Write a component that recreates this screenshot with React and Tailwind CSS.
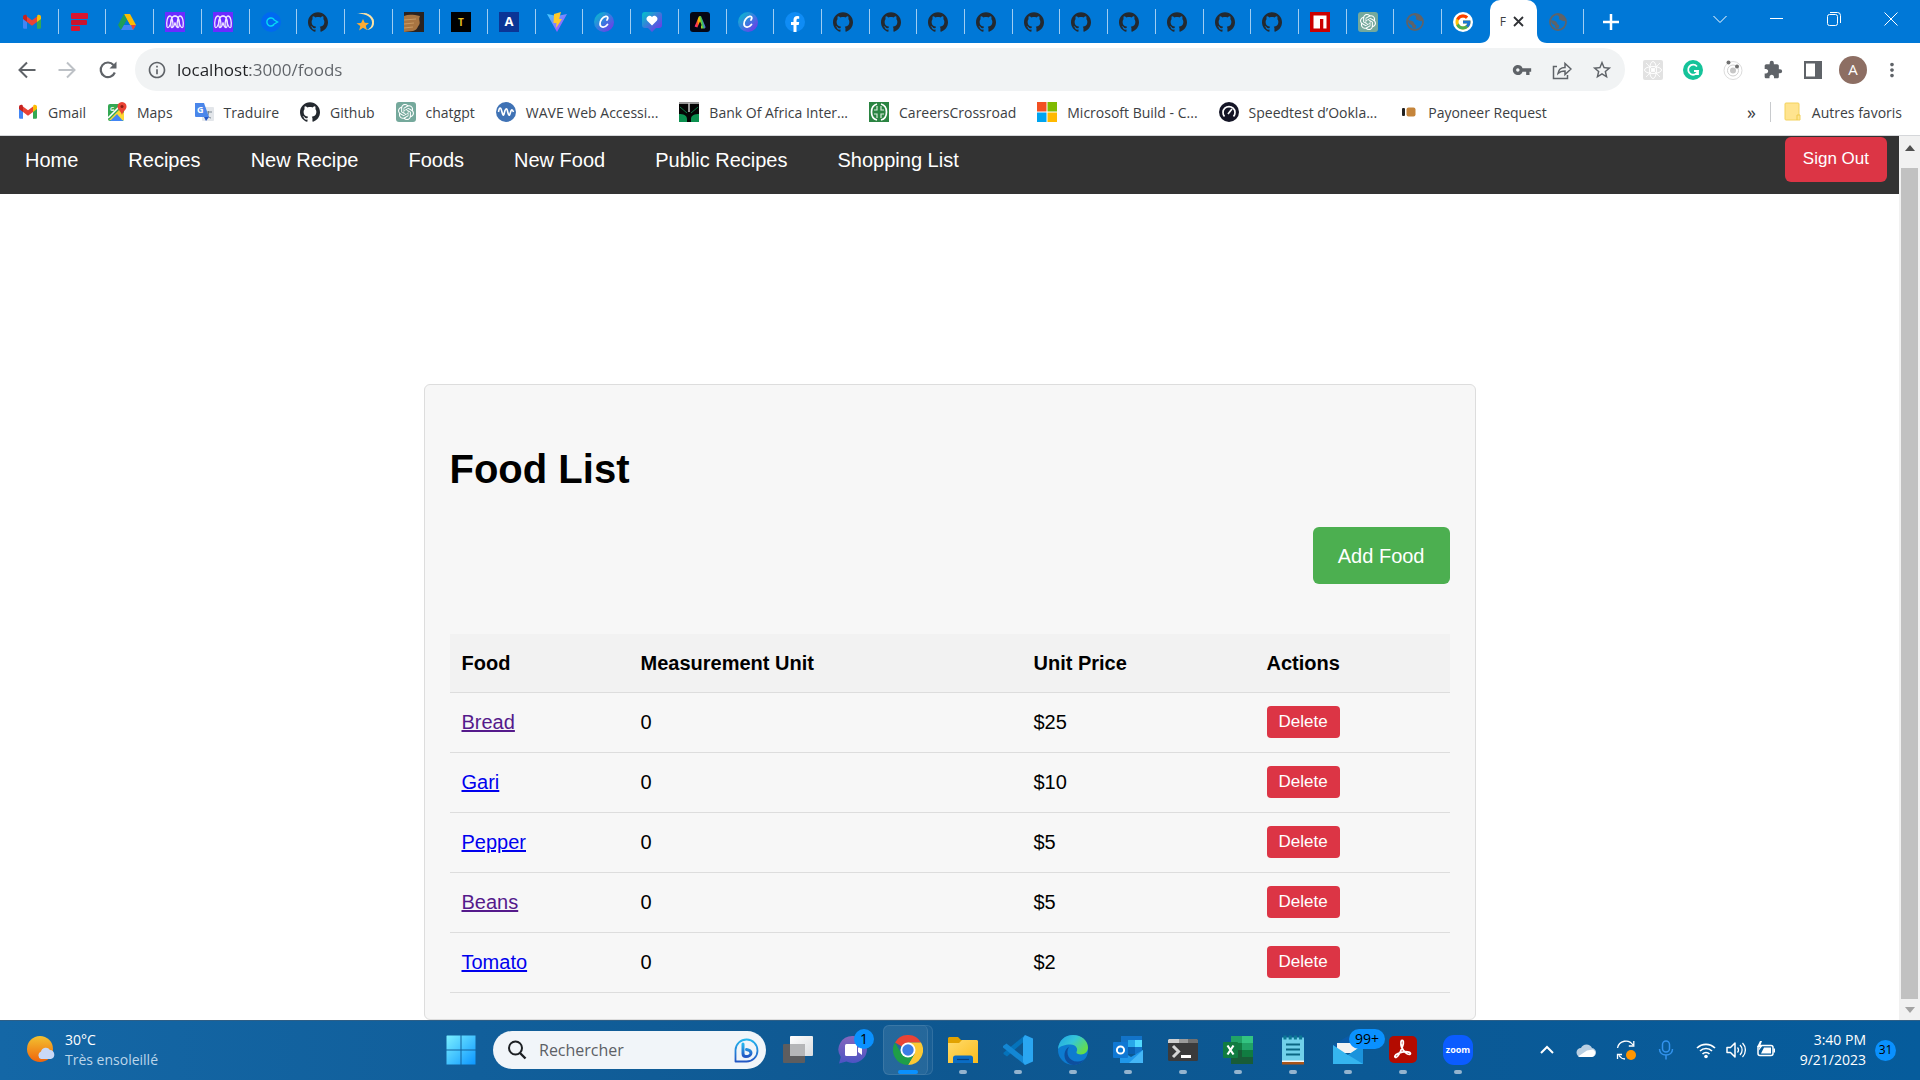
import React from "react";
import { SiGithub, SiOpenai } from "react-icons/si";
import { FcGoogle } from "react-icons/fc";
import {
  MdVpnKey,
  MdExtension,
  MdStarBorder,
  MdMoreVert,
  MdInfoOutline,
} from "react-icons/md";

/* ---------- shared icons ---------- */

const Svg = ({ className = "h-5 w-5", box = "0 0 20 20", children }) => (
  <svg className={className} viewBox={box} fill="none" aria-hidden="true">
    {children}
  </svg>
);

const Gmail = () => (
  <Svg>
    <path d="M1 5v10.5c0 .8.6 1.3 1.3 1.3H5V9z" fill="#4285f4" />
    <path d="M19 5v10.5c0 .8-.6 1.3-1.3 1.3H15V9z" fill="#34a853" />
    <path d="M15 5.5V10l4-3V5c0-2-2.200-2.900-3.600-1.800z" fill="#fbbc04" />
    <path d="M5 10V4.500l5 3.800 5-3.800V10l-5 3.800z" fill="#ea4335" />
    <path d="M1 5v2l4 3V4.500L4.600 3.200C3.200 2.100 1 3 1 5z" fill="#c5221f" />
  </Svg>
);

const Freeform = () => (
  <Svg>
    <rect x="1" y="1" width="17" height="6" rx="1" fill="#d9152f" />
    <rect x="1" y="8" width="16" height="5" rx="1" fill="#c8142d" />
    <rect x="1" y="14" width="9" height="5" rx="1" fill="#d9152f" />
  </Svg>
);

const Drive = () => (
  <Svg>
    <path d="M7 2h6l6 11h-6z" fill="#fbbc04" />
    <path d="M7 2l3 6-6 10-3-5z" fill="#1e9d57" />
    <path d="M7 13h12l-3 5H4z" fill="#4285f4" />
    <path d="M14 13h5l-3 5z" fill="#ea4335" />
    <path d="M10 8l3 5H7z" fill="#0078d7" />
  </Svg>
);

const Loops = () => (
  <Svg>
    <rect width="20" height="20" fill="#6c2bff" />
    <path
      d="M2 15C1 10 2.500 4 5 4s4 11 2 11.500S5 4 10 4s5 11 3 11.500S12.500 4 15 4s4 6 3 11"
      stroke="#efe8ff"
      strokeWidth="1.300"
    />
    <path
      d="M2 15c1.500 2 3.500-2 4-6s2-5 4-5M18 15c-1.500 2-3.500-2-4-6s-2-5-4-5M7 15.500c2 0 2.500-3 3-5 .5 2 1 5 3 5"
      stroke="#efe8ff"
      strokeWidth="1.200"
    />
  </Svg>
);

const CircleC = () => (
  <Svg>
    <circle cx="10" cy="10" r="10" fill="#0069f0" />
    <path d="M13 7.500A4 4 0 1 0 13 12.500M12.500 7.500l4 2.500-4 2.500" stroke="#05dcf5" strokeWidth="1.400" />
  </Svg>
);

const GithubTab = () => <SiGithub className="h-5 w-5 text-[#24292f]" />;

const Dizzy = () => (
  <Svg>
    <path d="M1 2c9-3 17 2 17 9 0 4-3 7-8 7 4-1 6-4 6-7.500C16 5 9 1 1 2z" fill="#fbe3a5" />
    <path d="M8 1.500c4 0 10 3.500 9.500 9" stroke="#fbe3a5" />
    <path d="M7 7l1.800 3.800 4.200.2-3.200 2.800 1.200 4.200L7 15.800 3.200 18.500l1.100-4.500L.5 11.200l4.600-.3z" fill="#ffac33" />
  </Svg>
);

const Wood = () => (
  <Svg>
    <rect width="20" height="20" fill="#2b2320" />
    <path d="M0 4c5-2 10-1 16 0-2 4 1 6-1 9s-2 5-6 6L0 20z" fill="#a87542" />
    <path d="M0 8l12-1M0 12l10-1M0 16l9-1" stroke="#c99a63" strokeWidth="1.200" />
  </Svg>
);

const Letter = ({ bg, color, children, size = "11" }) => (
  <Svg>
    <rect width="20" height="20" fill={bg} />
    <text x="10" y="14" textAnchor="middle" fontSize={size} fontWeight="700" fontFamily="Open Sans, sans-serif" fill={color}>
      {children}
    </text>
  </Svg>
);

const Vite = () => (
  <Svg>
    <defs>
      <linearGradient id="viteBody" x1="0" y1="0" x2="1" y2="1">
        <stop offset="0" stopColor="#41d1ff" />
        <stop offset="1" stopColor="#bd34fe" />
      </linearGradient>
    </defs>
    <path d="M0 2l10 2 10-2-10 18z" fill="url(#viteBody)" />
    <path d="M14 0L7 2l-.5 9h3L9 16l6-9h-3z" fill="#ffc928" />
  </Svg>
);

const Canva = () => (
  <Svg>
    <defs>
      <linearGradient id="canvaDisc" x1="0" y1="0" x2="1" y2="1">
        <stop offset="0" stopColor="#00c4cc" />
        <stop offset=".5" stopColor="#3a7be0" />
        <stop offset="1" stopColor="#7d2ae8" />
      </linearGradient>
    </defs>
    <circle cx="10" cy="10" r="10" fill="url(#canvaDisc)" />
    <path d="M13 8c1.500-2 .8-4-1.200-3.600C8.500 5 5.800 9 6 12c.3 4 5 4 7.500.5" stroke="#fff" strokeWidth="1.800" strokeLinecap="round" />
  </Svg>
);

const Heart = () => (
  <Svg>
    <defs>
      <linearGradient id="heartBubble" x1="0" y1="0" x2="1" y2="1">
        <stop offset="0" stopColor="#00c4cc" />
        <stop offset="1" stopColor="#7d2ae8" />
      </linearGradient>
    </defs>
    <path d="M3 0h14a3 3 0 0 1 3 3v10a3 3 0 0 1-3 3h-3l-4 4-4-4H3a3 3 0 0 1-3-3V3a3 3 0 0 1 3-3z" fill="url(#heartBubble)" />
    <path d="M10 13.500L5 8.500C3 5.500 7.500 2 10 5c2.500-3 7 .5 5 3.500z" fill="#fff" />
  </Svg>
);

const Express = () => (
  <Svg>
    <defs>
      <linearGradient id="expressMark" x1="5" y1="14" x2="15" y2="12" gradientUnits="userSpaceOnUse">
        <stop offset="0" stopColor="#ff2d95" />
        <stop offset=".25" stopColor="#ff3b30" />
        <stop offset=".5" stopColor="#ffcc00" />
        <stop offset=".75" stopColor="#34c759" />
        <stop offset="1" stopColor="#5856ff" />
      </linearGradient>
    </defs>
    <rect width="20" height="20" rx="3" fill="#050614" />
    <path d="M6 15l4-9.500L14 15h-3" stroke="url(#expressMark)" strokeWidth="3" strokeLinejoin="round" />
  </Svg>
);

const Facebook = () => (
  <Svg>
    <circle cx="10" cy="10" r="10" fill="#0f8cf5" />
    <path d="M8.500 20v-7H6v-3h2.500V7.800C8.500 5.300 10 4 12.200 4l2 .2v2.600h-1.200c-1.200 0-1.500.7-1.500 1.500V10h2.700l-.5 3h-2.200v7z" fill="#fff" />
  </Svg>
);

const Npm = () => (
  <Svg>
    <rect width="20" height="20" fill="#cb0000" />
    <path d="M3.500 3.500h13v13h-3.200V7H10v9.500H3.500z" fill="#fff" />
  </Svg>
);

const ChatGpt = () => (
  <span className="flex h-5 w-5 items-center justify-center rounded-[3px] bg-[#75a99c]">
    <SiOpenai className="h-4 w-4 text-white" />
  </span>
);

const DarkGlobe = () => (
  <Svg>
    <circle cx="10" cy="10" r="8" stroke="#5f6368" strokeWidth="1.800" />
    <path d="M3 8c2 1 5 0 6 3s3 1 2 4-4 1-4-1-4-1-4-6zM9 2c0 2 3 2 2 4s3 2 4 3 2-1 3 1c0-4-4-9-9-8z" fill="#5f6368" />
  </Svg>
);

const GoogleTab = () => (
  <span className="flex h-5 w-5 items-center justify-center rounded-full bg-white">
    <FcGoogle className="h-[18px] w-[18px]" />
  </span>
);

const leadingTabs = [
  ["Gmail", Gmail],
  ["Freeform", Freeform],
  ["Drive", Drive],
  ["Microverse", Loops],
  ["Microverse program", Loops],
  ["Coursera", CircleC],
  ["GitHub", GithubTab],
  ["Magic", Dizzy],
  ["Woodwork", Wood],
  ["T", () => <Letter bg="#000" color="#e8c020" size="10">T</Letter>],
  ["A", () => <Letter bg="#0b3596" color="#fff" size="13">A</Letter>],
  ["Vite", Vite],
  ["Canva", Canva],
  ["Favourites", Heart],
  ["Express", Express],
  ["Canva design", Canva],
  ["Facebook", Facebook],
  ...Array.from({ length: 10 }, (_, i) => [`GitHub page ${i + 1}`, GithubTab]),
  ["npm", Npm],
  ["ChatGPT", ChatGpt],
  ["Localhost", DarkGlobe],
  ["Google", GoogleTab],
];

/* ---------- browser frame ---------- */

function Tab({ label, Icon, divider = true }) {
  return (
    <button
      aria-label={label}
      className="relative flex min-w-0 flex-1 basis-0 items-center pl-[11px]"
    >
      <Icon />
      {divider && <span className="absolute right-0 h-[25px] w-px bg-[#9fcdf2]" />}
    </button>
  );
}

function TabStrip() {
  return (
    <div className="flex h-[43px] bg-[#0078d7]">
      <div className="ml-[11px] flex flex-1">
        {leadingTabs.map(([label, Icon], i) => (
          <Tab key={label} label={label} Icon={Icon} divider={i < leadingTabs.length - 1} />
        ))}
        <div className="relative flex min-w-0 flex-1 basis-0 items-center rounded-t-[10px] bg-white pl-[10px]">
          <svg className="absolute bottom-0 -left-[10px] h-[10px] w-[10px]" viewBox="0 0 10 10" aria-hidden="true">
            <path d="M10 0v10H0C6 10 10 6 10 0z" fill="#fff" />
          </svg>
          <svg className="absolute -right-[10px] bottom-0 h-[10px] w-[10px]" viewBox="0 0 10 10" aria-hidden="true">
            <path d="M0 0v10h10C4 10 0 6 0 0z" fill="#fff" />
          </svg>
          <span className="text-[12px] text-[#3c4043]">F</span>
          <button aria-label="Close tab" className="ml-0.5 flex h-5 w-5 items-center justify-center">
            <Svg className="h-[11px] w-[11px]" box="0 0 11 11">
              <path d="M1 1l9 9M10 1l-9 9" stroke="#303236" strokeWidth="1.800" />
            </Svg>
          </button>
        </div>
        <Tab label="Localhost page" Icon={DarkGlobe} />
      </div>
      <div className="flex w-[336px] items-center">
        <button aria-label="New tab" className="ml-[19px]">
          <Svg className="h-4 w-4" box="0 0 16 16">
            <path d="M8 0v16M0 8h16" stroke="#fff" strokeWidth="2.500" />
          </Svg>
        </button>
        <div className="mr-px ml-auto flex h-full items-start">
          <button aria-label="Search tabs" className="flex h-[37px] w-[57px] items-center justify-center">
            <Svg className="h-[14px] w-[14px]" box="0 0 14 14">
              <path d="M0.500 4l6.500 6.500L13.500 4" stroke="#fff" />
            </Svg>
          </button>
          <button aria-label="Minimise" className="flex h-[37px] w-[57px] items-center justify-center">
            <span className="h-px w-[13px] bg-white" />
          </button>
          <button aria-label="Restore" className="flex h-[37px] w-[57px] items-center justify-center">
            <Svg className="h-[14px] w-[14px]" box="0 0 14 14">
              <rect x=".5" y="2.500" width="10" height="11" rx="2" stroke="#fff" />
              <path d="M3 .5h7.500a3 3 0 0 1 3 3V11" stroke="#fff" />
            </Svg>
          </button>
          <button aria-label="Close window" className="flex h-[37px] w-[57px] items-center justify-center">
            <Svg className="h-[14px] w-[14px]" box="0 0 14 14">
              <path d="M.5.5l13 13M13.500.5l-13 13" stroke="#fff" />
            </Svg>
          </button>
        </div>
      </div>
    </div>
  );
}

function Toolbar() {
  return (
    <div className="flex h-[50px] items-center bg-white pt-[3px] text-[#5f6368]">
      <div className="flex w-[135px] items-center pl-[17px]">
        <button aria-label="Back" className="w-5">
          <Svg>
            <path d="M18.500 10H3M10 2.500L2.500 10l7.500 7.500" stroke="#5f6368" strokeWidth="2" />
          </Svg>
        </button>
        <button aria-label="Forward" className="ml-5 w-5">
          <Svg>
            <path d="M1.500 10H17M10 2.500l7.500 7.500-7.500 7.500" stroke="#bdc1c6" strokeWidth="2" />
          </Svg>
        </button>
        <button aria-label="Reload" className="ml-[21px] w-5">
          <Svg>
            <path d="M16.800 12.500A7.300 7.300 0 1 1 15.500 5" stroke="#5f6368" strokeWidth="2.200" />
            <path d="M18.500 1.500v7h-7z" fill="#5f6368" />
          </Svg>
        </button>
      </div>
      <div className="flex h-[43px] flex-1 items-center rounded-full bg-[#f1f3f4] pr-3 pl-3">
        <MdInfoOutline className="h-5 w-5" />
        <input
          aria-label="Address"
          className="ml-[10px] min-w-0 flex-1 bg-[linear-gradient(to_right,#202124_73px,#5f6368_73px)] bg-clip-text text-[17px] text-transparent caret-black outline-none"
          defaultValue="localhost:3000/foods"
        />
        <button aria-label="Passwords">
          <MdVpnKey className="h-5 w-5" />
        </button>
        <button aria-label="Share" className="ml-5">
          <Svg>
            <path d="M5 6.500H1.500V18.500h14V15M6 13.500c.5-4 3-6 7-6V3.500l6 5.500-6 5.500v-3.500c-3 0-5 .5-7 2.500z" stroke="#5f6368" strokeWidth="1.500" />
          </Svg>
        </button>
        <button aria-label="Bookmark" className="ml-[19px]">
          <MdStarBorder className="h-[22px] w-[22px]" />
        </button>
      </div>
      <div className="flex w-[295px] items-center pl-[18px]">
        <button aria-label="React tools" className="w-5">
          <Svg>
            <rect width="20" height="20" rx="2" fill="#e2e2e2" />
            <circle cx="10" cy="10" r="2" fill="#fff" />
            <ellipse cx="10" cy="10" rx="8.500" ry="3.500" stroke="#fff" />
            <ellipse cx="10" cy="10" rx="3.500" ry="8.500" stroke="#fff" />
            <path d="M3 3l14 14M17 3L3 17" stroke="#fff" strokeWidth=".8" />
          </Svg>
        </button>
        <button aria-label="Grammarly" className="ml-5 w-5">
          <Svg>
            <circle cx="10" cy="10" r="10" fill="#15c39a" />
            <path d="M14 6.500A5 5 0 1 0 15 11h-4M15 11v4" stroke="#fff" strokeWidth="1.800" />
          </Svg>
        </button>
        <button aria-label="Orbit" className="ml-5 w-5">
          <Svg>
            <circle cx="10" cy="10.500" r="9" stroke="#dcdcdc" />
            <circle cx="10" cy="10.500" r="5.500" stroke="#d0d0d0" />
            <circle cx="10" cy="10.500" r="3" fill="#c6c6c6" />
            <circle cx="5.500" cy="2.500" r="2" fill="#6f6f6f" />
            <circle cx="14" cy="6.500" r="2" fill="#6f6f6f" />
          </Svg>
        </button>
        <button aria-label="Extensions" className="ml-5">
          <MdExtension className="h-5 w-5" />
        </button>
        <button aria-label="Side panel" className="ml-5">
          <Svg>
            <path d="M1 1h18v18H1zM3 3.500v13h9v-13z" fill="#5f6368" fillRule="evenodd" />
          </Svg>
        </button>
        <button
          aria-label="Profile"
          className="ml-4 flex h-7 w-7 items-center justify-center rounded-full bg-[#8d6e63] text-[15px] text-white"
        >
          A
        </button>
        <button aria-label="Menu" className="ml-[14px]">
          <MdMoreVert className="h-[22px] w-[22px]" />
        </button>
      </div>
    </div>
  );
}

const MapsIcon = () => (
  <Svg>
    <rect x="1" y="2" width="16" height="17" rx="2" fill="#34a853" />
    <path d="M2 18L13 7l4 4v7z" fill="#fdd835" />
    <path d="M3 19l7-7 6 7z" fill="#4285f4" />
    <path d="M1 16L12 5" stroke="#fff" strokeWidth="1.600" />
    <path d="M15 0c3 0 4.500 2.200 4.500 4.500C19.500 8 16 9 15 13c-1-4-4.500-5-4.500-8.500C10.500 2.200 12 0 15 0z" fill="#ea4335" />
    <circle cx="15" cy="4.500" r="1.500" fill="#8c1c13" />
    <text x="3" y="9" fontSize="6" fontWeight="700" fill="#fff" fontFamily="Open Sans, sans-serif">G</text>
  </Svg>
);

const TranslateIcon = () => (
  <Svg>
    <rect x="8" y="5" width="12" height="14" rx="1" fill="#e3e6ea" />
    <path d="M11 10h7M14.500 9v1c0 3-1 5-3 6M12.500 12c1 2 3 4 4.500 4" stroke="#7a8791" />
    <path d="M1 1h9l5 14H2a1 1 0 0 1-1-1z" fill="#4a86ea" />
    <path d="M10 15h5l-3 4z" fill="#2457c5" />
    <text x="3" y="11" fontSize="9" fontWeight="700" fill="#fff" fontFamily="Open Sans, sans-serif">G</text>
  </Svg>
);

const WaveIcon = () => (
  <Svg>
    <circle cx="10" cy="10" r="10" fill="#3f72b5" />
    <path d="M2.500 10c.8-5 2.200-5 3.200-1s1.800 6 2.600 2 2.400-6 3.200-2 1.800 6 2.800 2 2-4 3.200-1" stroke="#fff" strokeWidth="1.600" />
  </Svg>
);

const BankIcon = () => (
  <Svg>
    <rect width="20" height="20" fill="#050505" />
    <path d="M0 12c4 0 8 1 8 5v3H0zM20 12c-4 0-8 1-8 5v3h8z" fill="#0c9150" />
    <path d="M0 1h20M10 1v9" stroke="#c9c9c9" strokeWidth="1.500" />
    <path d="M1 5l7 6M19 5l-7 6" stroke="#0c7a45" />
  </Svg>
);

const CareersIcon = () => (
  <Svg>
    <rect width="20" height="20" fill="#2b8442" />
    <path d="M8 2C4 3 2.500 6 2.500 10S4 17 8 18M12 2c4 1 5.500 4 5.500 8s-1.500 7-5.500 8" stroke="#fff" strokeWidth="1.700" />
    <path d="M8 4v4H5M12 4v4h3M8 16v-4H5M12 16v-4h3" stroke="#d7ecd9" strokeWidth="1.200" />
  </Svg>
);

const MicrosoftIcon = () => (
  <Svg>
    <path d="M0 0h9.500v9.500H0z" fill="#f25022" />
    <path d="M10.500 0H20v9.500h-9.500z" fill="#7fba00" />
    <path d="M0 10.500h9.500V20H0z" fill="#00a4ef" />
    <path d="M10.500 10.500H20V20h-9.500z" fill="#ffb900" />
  </Svg>
);

const SpeedtestIcon = () => (
  <Svg>
    <circle cx="10" cy="10" r="10" fill="#141526" />
    <path d="M5.500 14.500a6 6 0 1 1 9 0" stroke="#fff" strokeWidth="1.700" />
    <path d="M9 12l4-5" stroke="#fff" strokeWidth="1.700" />
  </Svg>
);

const PayoneerIcon = () => (
  <Svg>
    <rect x="4" y="6" width="3" height="8" rx="1" fill="#222" />
    <rect x="8.500" y="5.500" width="9" height="9" rx="2" fill="#c5853b" />
  </Svg>
);

const bookmarks = [
  ["Gmail", Gmail],
  ["Maps", MapsIcon],
  ["Traduire", TranslateIcon],
  ["Github", GithubTab],
  ["chatgpt", ChatGpt],
  ["WAVE Web Accessi...", WaveIcon],
  ["Bank Of Africa Inter...", BankIcon],
  ["CareersCrossroad", CareersIcon],
  ["Microsoft Build - C...", MicrosoftIcon],
  ["Speedtest d’Ookla...", SpeedtestIcon],
  ["Payoneer Request", PayoneerIcon],
];

function BookmarksBar() {
  return (
    <div className="flex h-[43px] items-center border-b border-[#d5d7da] bg-white pr-[18px] pb-1 pl-[18px] text-[14px] text-[#3c4043]">
      <div className="flex items-center gap-[21px]">
        {bookmarks.map(([label, Icon]) => (
          <a key={label} href="#" className="flex items-center gap-2.5 whitespace-nowrap">
            <Icon />
            {label}
          </a>
        ))}
      </div>
      <button aria-label="More bookmarks" className="ml-auto text-[18px] leading-5">
        »
      </button>
      <span className="ml-[14px] h-5 w-px bg-[#c8cacd]" />
      <a href="#" className="ml-[13px] flex items-center gap-[11px] whitespace-nowrap">
        <Svg className="h-5 w-[17px]" box="0 0 17 20">
          <path d="M2 1h12a1 1 0 0 1 1 1v11h1v5H2a1 1 0 0 1-1-1V2a1 1 0 0 1 1-1z" fill="#ffe48f" stroke="#f3d25c" />
          <path d="M13 18v-5h2.500" stroke="#eec94b" />
        </Svg>
        Autres favoris
      </a>
    </div>
  );
}

/* ---------- web page ---------- */

const navLinks = ["Home", "Recipes", "New Recipe", "Foods", "New Food", "Public Recipes", "Shopping List"];

const foods = [
  { name: "Bread", unit: 0, price: "$25", visited: true },
  { name: "Gari", unit: 0, price: "$10", visited: false },
  { name: "Pepper", unit: 0, price: "$5", visited: false },
  { name: "Beans", unit: 0, price: "$5", visited: true },
  { name: "Tomato", unit: 0, price: "$2", visited: false },
];

function FoodTable() {
  return (
    <table className="w-full table-fixed border-collapse text-left">
      <colgroup>
        <col className="w-[179px]" />
        <col className="w-[393px]" />
        <col className="w-[233px]" />
        <col />
      </colgroup>
      <thead>
        <tr className="h-[58px] border-b border-[#dddddd] bg-[#f2f2f2]">
          {["Food", "Measurement Unit", "Unit Price", "Actions"].map((h) => (
            <th key={h} className="px-3 font-bold">
              {h}
            </th>
          ))}
        </tr>
      </thead>
      <tbody>
        {foods.map((f) => (
          <tr key={f.name} className="h-[60px] border-b border-[#dddddd]">
            <td className="px-3">
              <a href="#" className={f.visited ? "text-[#551a8b] underline" : "text-[#0000ee] underline"}>
                {f.name}
              </a>
            </td>
            <td className="px-3">{f.unit}</td>
            <td className="px-3">{f.price}</td>
            <td className="px-3">
              <button className="flex h-8 items-center rounded bg-[#dc3545] px-3 text-[17px] text-white">
                Delete
              </button>
            </td>
          </tr>
        ))}
      </tbody>
    </table>
  );
}

function WebPage() {
  return (
    <div className="flex flex-1 bg-white font-['Liberation_Sans',Arial,sans-serif] text-[20px] leading-6 text-black">
      <div className="min-w-0 flex-1">
        <nav className="flex h-[58px] items-start justify-between bg-[#333333] pr-3 text-white">
          <ul className="flex gap-[50px] pt-3 pl-[25px]">
            {navLinks.map((l) => (
              <li key={l}>
                <a href="#">{l}</a>
              </li>
            ))}
          </ul>
          <button className="mt-px h-[45px] rounded-md bg-[#dc3545] px-[18px] pb-0.5 text-[17px]">Sign Out</button>
        </nav>
        <main className="mx-auto mt-[190px] w-[1052px] max-w-full rounded-md border border-[#dddddd] bg-[#f7f7f7] px-[25px] pt-[60px] pb-[26px]">
          <h1 className="text-[40px] leading-[48px] font-bold">Food List</h1>
          <div className="mt-[34px] mb-[50px] flex justify-end">
            <button className="h-[57px] rounded-md bg-[#4caf50] px-[25px] text-white">Add Food</button>
          </div>
          <FoodTable />
        </main>
      </div>
      <div className="flex w-[21px] flex-col items-center bg-[#f1f1f1]">
        <button aria-label="Scroll up" className="flex h-8 w-full items-start justify-center pt-[9px]">
          <Svg className="h-[6px] w-[10px]" box="0 0 10 6">
            <path d="M0 6l5-6 5 6z" fill="#505050" />
          </Svg>
        </button>
        <div className="w-[17px] flex-1 bg-[#c1c1c1]" />
        <button aria-label="Scroll down" className="flex h-[21px] w-full items-center justify-center">
          <Svg className="h-[6px] w-[10px]" box="0 0 10 6">
            <path d="M0 0l5 6 5-6z" fill="#a3a3a3" />
          </Svg>
        </button>
      </div>
    </div>
  );
}

/* ---------- taskbar ---------- */

const Icon30 = ({ children }) => (
  <Svg className="h-[30px] w-[30px]" box="0 0 30 30">
    {children}
  </Svg>
);

const StartIcon = () => (
  <Icon30>
    <defs>
      <linearGradient id="startPane" x1="0" y1="0" x2="30" y2="30" gradientUnits="userSpaceOnUse">
        <stop offset="0" stopColor="#7df1ff" />
        <stop offset="1" stopColor="#0a95ff" />
      </linearGradient>
    </defs>
    <path d="M1 .5h13.500v14H.5V1zM15.500.5h14v14h-14zM.5 15.500h14v14H.5zM15.500 15.500h14v14h-14z" fill="url(#startPane)" />
  </Icon30>
);

const TaskViewIcon = () => (
  <Icon30>
    <defs>
      <linearGradient id="tvFront" x1="0" y1="0" x2="1" y2="1">
        <stop offset="0" stopColor="#fff" />
        <stop offset="1" stopColor="#d9dcdf" />
      </linearGradient>
    </defs>
    <rect x="0" y="9" width="22" height="19" rx="1" fill="#5d5d5f" />
    <rect x="7" y="1" width="23" height="20" rx="1" fill="url(#tvFront)" />
    <rect x="7" y="9" width="15" height="12" fill="#b5b6b8" />
  </Icon30>
);

const ChatIcon = () => (
  <Icon30>
    <defs>
      <linearGradient id="chatBubble" x1="0" y1="0" x2="0" y2="1">
        <stop offset="0" stopColor="#8667bd" />
        <stop offset="1" stopColor="#4b53c4" />
      </linearGradient>
    </defs>
    <path d="M15 1a14 13.500 0 1 1-6.500 25.500L1 28.500l1.800-6.500A14 13.500 0 0 1 15 1z" fill="url(#chatBubble)" />
    <rect x="7" y="9" width="12" height="12" rx="1.500" fill="#fff" />
    <path d="M20 13l4-3v10l-4-3z" fill="#fff" />
  </Icon30>
);

const ChromeIcon = () => (
  <Icon30>
    <path d="M15 15L2 7.500A15 15 0 0 1 28 7.500H15z" fill="#ea4335" />
    <path d="M28 7.500A15 15 0 0 1 15 30l6.500-11.200L15 7.500z" fill="#fcc934" />
    <path d="M15 30A15 15 0 0 1 2 7.500l6.500 11.300L15 22.500l6.500-3.700z" fill="#1e9e48" />
    <circle cx="15" cy="15" r="7.500" fill="#fff" />
    <circle cx="15" cy="15" r="5.700" fill="#3c7de6" />
  </Icon30>
);

const ExplorerIcon = () => (
  <Icon30>
    <defs>
      <linearGradient id="folderFront" x1="0" y1="0" x2="1" y2="1">
        <stop offset="0" stopColor="#ffdb6b" />
        <stop offset="1" stopColor="#fbbc1d" />
      </linearGradient>
    </defs>
    <path d="M1 2h9l3 3h16v8H0V3z" fill="#e1a200" />
    <path d="M0 8h11l3-3h15l1 1v22H0z" fill="url(#folderFront)" />
    <path d="M5 28v-5a2.500 2.500 0 0 1 2.500-2.500h15A2.500 2.500 0 0 1 25 23v5z" fill="#0a6cc4" />
    <path d="M9 24.500h12" stroke="#063f7d" strokeWidth="1.200" />
  </Icon30>
);

const VsCodeIcon = () => (
  <Icon30>
    <path d="M22 0l-1 6.500L4 21.500.5 19v-1.200z" fill="#0573bb" />
    <path d="M0 11l3.500-2.500L22 23v7L0 12.500z" fill="#1387d4" />
    <path d="M22 0l8 3.500v23L22 30l-2-3V3z" fill="#2aa6f2" />
  </Icon30>
);

const EdgeIcon = () => (
  <Icon30>
    <defs>
      <linearGradient id="edgeTop" x1="0" y1="0" x2="1" y2=".6">
        <stop offset="0" stopColor="#1fa2e6" />
        <stop offset=".5" stopColor="#35c6d8" />
        <stop offset="1" stopColor="#64dd4b" />
      </linearGradient>
    </defs>
    <circle cx="15" cy="15" r="15" fill="#0d7bd0" />
    <path d="M0 14C1 5 7 0 15 0c9 0 15 6 15 12.500 0 4-3 7-7 7-3 0-5-1-4.500-2.500 2-3-.5-7.500-6-7.500C7 9.500 2 11 0 14z" fill="url(#edgeTop)" />
    <path d="M11 12c-4 6 0 15 9 14.500 3 0 6-1.500 7.500-3.500C25 27.500 20 30 15 30 9 29 6 24 6.500 19c.3-3 2-6 4.500-7z" fill="#0d4f9e" />
  </Icon30>
);

const OutlookIcon = () => (
  <Icon30>
    <rect x="8" y="1" width="21" height="18" fill="#1273c9" />
    <path d="M15 5h7v7h-7z" fill="#28a8ea" />
    <path d="M22 5h7v7h-7z" fill="#50d9ff" />
    <path d="M15 12h7v7h-7z" fill="#0a5fb0" />
    <path d="M7 15l11 7 12-7v13H7z" fill="#1f97ea" />
    <path d="M30 15v13H16z" fill="#44b6f7" />
    <rect x="0" y="7" width="15" height="16" rx="1" fill="#0f78d4" />
    <circle cx="7.500" cy="15" r="3.600" stroke="#fff" strokeWidth="2" />
  </Icon30>
);

const TerminalIcon = () => (
  <Icon30>
    <rect x="0" y="4" width="30" height="22" rx="1.500" fill="#3b3b3c" />
    <path d="M1 4h10v4H0V5z" fill="#d0d0d0" />
    <path d="M11 4h9v4h-9z" fill="#9b9b9b" />
    <path d="M20 4h9l1 1v3H20z" fill="#6f6f6f" />
    <path d="M5 11l5.500 5.500L5 22" stroke="#d6d6d6" strokeWidth="3" />
    <path d="M13 21.500h10" stroke="#fff" strokeWidth="3" />
  </Icon30>
);

const ExcelIcon = () => (
  <Icon30>
    <path d="M8 1h11v7H8z" fill="#21a366" />
    <path d="M19 1h11v7H19z" fill="#33c481" />
    <path d="M8 8h11v7H8z" fill="#107c41" />
    <path d="M19 8h11v7H19z" fill="#21a366" />
    <path d="M8 15h11v7H8z" fill="#185c37" />
    <path d="M19 15h11v7H19z" fill="#107c41" />
    <path d="M8 22h22v7H8z" fill="#185c37" />
    <rect x="0" y="7" width="15" height="16" rx="1" fill="#107c41" />
    <path d="M4.500 10.500l6 9M10.500 10.500l-6 9" stroke="#fff" strokeWidth="2.200" />
  </Icon30>
);

const NotepadIcon = () => (
  <Icon30>
    <path d="M4 26h22v3.500H4z" fill="#a9551a" />
    <path d="M4 24h22v3H4z" fill="#f3f5f6" />
    <rect x="4" y="2.500" width="22" height="23" fill="#71d0ea" />
    <path d="M8 9.500h14M8 14.500h14M8 19.500h14" stroke="#0b6683" strokeWidth="2" />
    <path d="M5.500 2.500h20" stroke="#0b7894" strokeWidth="4" strokeDasharray="3 2.200" />
  </Icon30>
);

const MailIcon = () => (
  <Icon30>
    <path d="M0 10L15 1l15 9v6H0z" fill="#0b5aa6" />
    <path d="M4 8h22v10H4z" fill="#f2f2f2" />
    <path d="M0 10l15 10 15-10v19H0z" fill="#35b5ef" />
    <path d="M30 10v19L12 18l3 2z" fill="#1b93dc" />
  </Icon30>
);

const AcrobatIcon = () => (
  <Icon30>
    <rect x="1" y="1" width="28" height="27" rx="5" fill="#b30b00" />
    <path
      d="M13.500 5.500c2-1 2.500 2 1 6S10 22 8 22.500c-2 0-1.500-2.500 2-4s9-2.200 11.500-1.200c2 1.200.5 2.800-2 1.700-3-1.500-6-5.500-6.500-9-.2-2 0-4 .5-4.500z"
      stroke="#fff"
      strokeWidth="1.800"
    />
  </Icon30>
);

const ZoomIcon = () => (
  <Icon30>
    <rect width="30" height="30" rx="11" fill="#0b5cff" />
    <text x="15" y="18" textAnchor="middle" fontSize="9" fontWeight="700" fontFamily="Open Sans, sans-serif" fill="#fff">
      zoom
    </text>
  </Icon30>
);

const apps = [
  { label: "Task view", Icon: TaskViewIcon },
  { label: "Chat", Icon: ChatIcon, badge: "1" },
  { label: "Chrome", Icon: ChromeIcon, active: true },
  { label: "Explorer", Icon: ExplorerIcon, open: true },
  { label: "VS Code", Icon: VsCodeIcon, open: true },
  { label: "Edge", Icon: EdgeIcon, open: true },
  { label: "Outlook", Icon: OutlookIcon, open: true },
  { label: "Terminal", Icon: TerminalIcon, open: true },
  { label: "Excel", Icon: ExcelIcon, open: true },
  { label: "Notepad", Icon: NotepadIcon, open: true },
  { label: "Mail", Icon: MailIcon, open: true, badge: "99+" },
  { label: "Acrobat", Icon: AcrobatIcon, open: true },
  { label: "Zoom", Icon: ZoomIcon, open: true },
];

function AppButton({ label, Icon, badge, active, open }) {
  return (
    <button aria-label={label} className="relative flex h-full w-[55px] items-center justify-center">
      {active && (
        <>
          <span className="absolute inset-y-[5px] left-[3px] w-[50px] rounded-md border border-white/10 bg-white/5" />
          <span className="absolute inset-y-[5px] left-[3px] w-[45px] rounded-md border-r border-white/10 bg-white/5" />
        </>
      )}
      <span className="relative">
        <Icon />
      </span>
      {badge && (
        <span className="absolute top-[9px] left-[29px] flex h-5 min-w-5 items-center justify-center rounded-full bg-[#0a91ff] px-1.5 text-[14px] leading-5 text-black">
          {badge}
        </span>
      )}
      {active && <span className="absolute bottom-[6px] h-1 w-5 rounded-full bg-[#0a91ff]" />}
      {open && <span className="absolute bottom-[6px] h-1 w-2 rounded-full bg-[#94b4cf]" />}
    </button>
  );
}

function Taskbar() {
  return (
    <footer className="grid h-[60px] grid-cols-[1fr_auto_1fr] items-center bg-linear-to-r from-[#1467a6] via-[#0e5790] to-[#065c9c] text-[14px] text-white shadow-[inset_0_1px_0_#2f5f86]">
      <button className="flex items-center gap-2.5 pl-[27px] text-left leading-5">
        <Svg className="h-8 w-7" box="0 0 28 32">
          <defs>
            <linearGradient id="sun" x1="0" y1="0" x2="0" y2="1">
              <stop offset="0" stopColor="#f2c231" />
              <stop offset="1" stopColor="#f0640c" />
            </linearGradient>
          </defs>
          <circle cx="13" cy="15" r="13" fill="url(#sun)" />
          <path d="M14 25a4 4 0 0 1 0-7.500 5 5 0 0 1 9-1.500 4.600 4.600 0 0 1 1 9z" fill="#c9d9f7" />
        </Svg>
        <span>
          <span className="block">30°C</span>
          <span className="block text-[#bcd6ea]">Très ensoleillé</span>
        </span>
      </button>
      <div className="flex h-full items-center pr-0.5">
        <button aria-label="Start" className="flex w-[55px] justify-center">
          <StartIcon />
        </button>
        <label className="mr-1 ml-[5px] flex h-[38px] w-[273px] items-center rounded-full bg-[#f1f5f9] pr-[7px] pl-[14px]">
          <Svg>
            <circle cx="8.500" cy="8" r="6.500" stroke="#1d2024" strokeWidth="2" />
            <path d="M13 13l5.500 5.500" stroke="#1d2024" strokeWidth="2.400" />
          </Svg>
          <input
            aria-label="Rechercher"
            placeholder="Rechercher"
            className="ml-3 min-w-0 flex-1 bg-transparent text-[16px] outline-none placeholder:text-[#5c6066]"
          />
          <Svg className="h-[25px] w-[25px]" box="0 0 25 25">
            <defs>
              <linearGradient id="bing" x1="0" y1="0" x2="0" y2="1">
                <stop offset="0" stopColor="#25b5ee" />
                <stop offset="1" stopColor="#2357c4" />
              </linearGradient>
            </defs>
            <path d="M1.500 23.500V12A11 11 0 1 1 12.500 23.500z" stroke="url(#bing)" strokeWidth="1.800" strokeLinejoin="round" />
            <path d="M9 6v9.500c0 2 1.500 3 3 3 2.500 0 5-1.500 5-3.500s-2-3-4.500-3.500" stroke="url(#bing)" strokeWidth="3" strokeLinecap="round" />
          </Svg>
        </label>
        {apps.map((a) => (
          <AppButton key={a.label} {...a} />
        ))}
      </div>
      <div className="flex items-center justify-end pr-6">
        <button aria-label="Hidden icons">
          <Svg className="h-[14px] w-[14px]" box="0 0 14 14">
            <path d="M1 10l6-6 6 6" stroke="#fff" strokeWidth="2" />
          </Svg>
        </button>
        <button aria-label="OneDrive" className="ml-[22px]">
          <Svg>
            <path d="M5 17a4.500 4.500 0 0 1 0-9 6 6 0 0 1 11 0 4.500 4.500 0 0 1-1 9z" fill="#b9cfe2" />
            <path d="M2 16.500l9-6 6-1a4 4 0 0 1-1 7.500H4z" fill="#fff" />
          </Svg>
        </button>
        <button aria-label="Updates" className="ml-5">
          <Svg>
            <path d="M1.500 8A8.500 8.500 0 0 1 17 5M17.800 1v5h-5M3 15.500A8 8 0 0 0 9 19M1.500 19v-4.500H6" stroke="#fff" strokeWidth="1.300" />
            <circle cx="15" cy="15" r="5" fill="#ff9500" />
          </Svg>
        </button>
        <button aria-label="Microphone" className="ml-5">
          <Svg>
            <rect x="6.500" y="1" width="7" height="11" rx="3.500" stroke="#3393ee" strokeWidth="1.500" />
            <path d="M3.500 9c0 4 3 6 6.500 6s6.500-2 6.500-6M10 15v4.500" stroke="#3393ee" strokeWidth="1.500" />
          </Svg>
        </button>
        <button aria-label="Network, volume and battery" className="ml-5 flex gap-[10px]">
          <Svg>
            <path d="M1 8a13 13 0 0 1 18 0M4 11a8.500 8.500 0 0 1 12 0M6.500 14a5 5 0 0 1 7 0" stroke="#fff" strokeWidth="1.700" />
            <circle cx="10" cy="16.500" r="1.800" fill="#fff" />
          </Svg>
          <Svg>
            <path d="M1 7.500h3.500L9 3v14l-4.500-4.500H1z" stroke="#fff" strokeWidth="1.500" strokeLinejoin="round" />
            <path d="M11.500 7.500a4 4 0 0 1 0 5M14 5a7 7 0 0 1 0 10M16.500 3a10 10 0 0 1 0 14" stroke="#fff" strokeWidth="1.300" />
          </Svg>
          <Svg>
            <rect x="2" y="5.500" width="15" height="10" rx="2" stroke="#fff" strokeWidth="1.500" />
            <path d="M8 7.500h7v6H5z" fill="#fff" />
            <path d="M17.500 8.500H19v4h-1.500z" fill="#fff" />
            <path d="M4 1L1 7h2.500L2.500 11 7 5H4.500L6 1z" fill="#fff" />
          </Svg>
        </button>
        <button className="ml-[20px] w-[70px] text-right leading-5 whitespace-nowrap">
          <span className="block">3:40 PM</span>
          <span className="block">9/21/2023</span>
        </button>
        <button
          aria-label="31 notifications"
          className="ml-[9px] flex h-[21px] w-[21px] items-center justify-center rounded-full bg-[#0a91ff] text-[12px] text-black"
        >
          31
        </button>
      </div>
    </footer>
  );
}

export default function App() {
  return (
    <div className="flex min-h-screen flex-col bg-white font-['Open_Sans','Noto_Sans',sans-serif]">
      <header>
        <TabStrip />
        <Toolbar />
        <BookmarksBar />
      </header>
      <WebPage />
      <Taskbar />
    </div>
  );
}
